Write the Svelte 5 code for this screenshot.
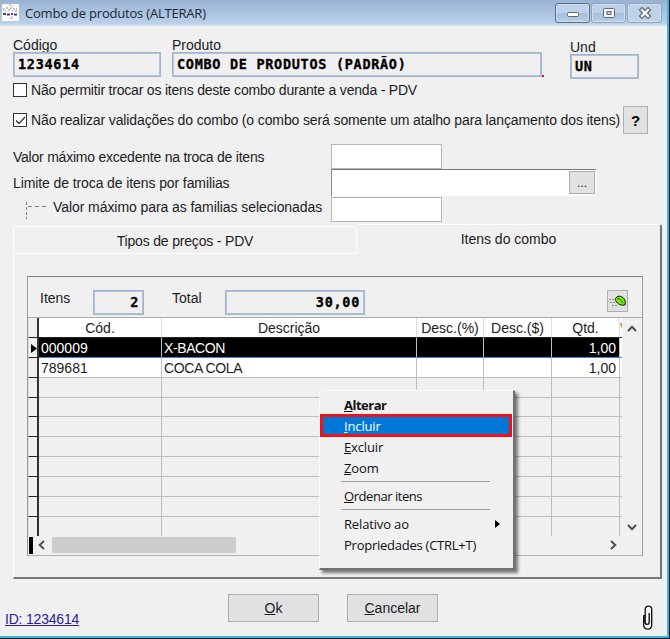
<script>
  let allowSwap = false;
  let skipValidation = true;
  let selected = 0;

  const columns = [
    { key: 'code', label: 'Cód.' },
    { key: 'name', label: 'Descrição' },
    { key: 'descPct', label: 'Desc.(%)' },
    { key: 'descVal', label: 'Desc.($)' },
    { key: 'qty', label: 'Qtd.' },
    { key: 'value', label: 'V' }
  ];

  const items = [
    { code: '000009', name: 'X-BACON', qty: '1,00' },
    { code: '789681', name: 'COCA COLA', qty: '1,00' }
  ];

  // the grid always shows ten rows, empty ones included
  const rows = Array.from({ length: 10 }, (_, i) => items[i] || null);

  const menu = [
    { key: 'A', rest: 'lterar', kind: 'default' },
    { key: 'I', rest: 'ncluir', kind: 'active' },
    { key: 'E', rest: 'xcluir' },
    { key: 'Z', rest: 'oom' },
    { separator: true },
    { key: 'O', rest: 'rdenar itens', kind: 'order' },
    { separator: true },
    { key: '', rest: 'Relativo ao', submenu: true },
    { key: '', rest: 'Propriedades (CTRL+T)', kind: 'props' }
  ];
</script>

<div class="window">
  <header class="titlebar">
    <svg class="app-icon" width="17" height="17" viewBox="0 0 17 17">
      <rect width="17" height="17" fill="#fff" />
      <path d="M1 5h2M4 4h2M8 4h2M11 5h2M14 5h1M3 7h1M6 6h2M10 7h1M13 7h2M7 1h2M10 2h1M8 14h2M10 13h1" stroke="#8b8b93" stroke-width="1" />
      <path d="M1 10h3M5 10.5h3M9 10h2M12 10.5h3" stroke="#3b41a8" stroke-width="2" />
    </svg>
    <span class="title">Combo de produtos (ALTERAR)</span>
    <div class="win-buttons">
      <button class="win-btn first" aria-label="Minimizar">
        <svg width="14" height="12" viewBox="0 0 14 12"><rect x="1.5" y="5.5" width="11" height="4" rx="1" fill="#fff" stroke="#64676f" /></svg>
      </button>
      <button class="win-btn" aria-label="Maximizar">
        <svg width="14" height="12" viewBox="0 0 14 12">
          <rect x="1.5" y="1.5" width="11" height="9" rx="1" fill="#f4f6f9" stroke="#64676f" />
          <rect x="5" y="4.5" width="4" height="3" fill="#b9cfe6" stroke="#64676f" />
        </svg>
      </button>
      <button class="win-btn last" aria-label="Fechar">
        <svg width="14" height="12" viewBox="0 0 14 12">
          <path d="M4 3l6 6M10 3l-6 6" stroke="#64676f" stroke-width="4.8" stroke-linecap="square" />
          <path d="M4 3l6 6M10 3l-6 6" stroke="#f4f6f9" stroke-width="2.4" stroke-linecap="square" />
        </svg>
      </button>
    </div>
  </header>

  <main class="body">
    <div class="fields">
      <div class="field code">
        <span class="label">Código</span>
        <div class="readonly">1234614</div>
      </div>
      <div class="field product">
        <span class="label">Produto</span>
        <div class="readonly">COMBO DE PRODUTOS (PADRÃO)</div>
        <i class="dot"></i>
      </div>
      <div class="field unit">
        <span class="label">Und</span>
        <div class="readonly">UN</div>
      </div>
    </div>

    <div class="check-row">
      <button class="checkbox" aria-label="Não permitir trocar" on:click={() => (allowSwap = !allowSwap)}>
        {#if allowSwap}<svg width="13" height="13" viewBox="0 0 13 13"><path d="M2 6.5l3 3 6-6.5" /></svg>{/if}
      </button>
      <span class="label check-a">Não permitir trocar os itens deste combo durante a venda - PDV</span>
    </div>
    <div class="check-row second">
      <button class="checkbox" aria-label="Não realizar validações" on:click={() => (skipValidation = !skipValidation)}>
        {#if skipValidation}<svg width="13" height="13" viewBox="0 0 13 13"><path d="M2 6.5l3 3 6-6.5" /></svg>{/if}
      </button>
      <span class="label check-b">Não realizar validações do combo (o combo será somente um atalho para lançamento dos itens)</span>
      <button class="help">?</button>
    </div>

    <div class="limit-row">
      <span class="label limit-a">Valor máximo excedente na troca de itens</span>
      <div class="input"></div>
    </div>
    <div class="limit-row lookup-row">
      <span class="label limit-b">Limite de troca de itens por familias</span>
      <div class="lookup"><button class="browse">...</button></div>
    </div>
    <div class="limit-row third">
      <svg class="branch" width="22" height="18" viewBox="0 0 22 18">
        <path d="M1.5 1v17" stroke="#808080" stroke-dasharray="3 2" />
        <path d="M3 5.5h19" stroke="#808080" stroke-dasharray="4 3" />
      </svg>
      <span class="label limit-c">Valor máximo para as familias selecionadas</span>
      <div class="input"></div>
    </div>

    <section class="tabs">
      <div class="tab-strip">
        <div class="tab label"><span class="tab-a">Tipos de preços - PDV</span></div>
        <div class="tab active label"><span class="tab-b">Itens do combo</span></div>
      </div>
      <div class="panel">
        <div class="frame">
          <div class="summary">
            <span class="label sum-items">Itens</span>
            <div class="readonly count">2</div>
            <span class="label sum-total">Total</span>
            <div class="readonly total">30,00</div>
            <button class="leaf" aria-label="Atualizar">
              <svg width="17" height="14" viewBox="0 0 17 14">
                <path d="M0 5.5h5M1 8.5h5M3 11.5h5" stroke="#8c8c8c" stroke-dasharray="2 1" />
                <path d="M6.5 4.5C8 1.5 12 1.5 14.5 4c2 2 2 4.5 1.500 7-3 .5-5.500 0-7.500-2C7 7.500 6 6 6.500 4.500z" fill="#7be80c" stroke="#111a08" />
                <path d="M8 5c2-1 4 .5 6 4" fill="none" stroke="#245b08" />
              </svg>
            </button>
          </div>

          <div class="grid-area">
            <div class="grid">
              <div class="row head">
                <div class="marker"></div>
                {#each columns as col}
                  <div class="cell {col.key}">{col.label}</div>
                {/each}
              </div>
              {#each rows as row, i}
                <div class="row" class:filled={row} class:selected={i === selected}>
                  <div class="marker">
                    {#if i === selected}
                      <svg width="6" height="9" viewBox="0 0 6 9"><path d="M0 0l6 4.500-6 4.500z" /></svg>
                    {/if}
                  </div>
                  {#each columns as col}
                    <div class="cell {col.key}">{row?.[col.key] ?? ''}</div>
                  {/each}
                </div>
              {/each}
            </div>
            <div class="vscroll">
              <svg width="10" height="7" viewBox="0 0 10 7"><path d="M1 6l4-4.300L9 6" /></svg>
              <svg width="10" height="7" viewBox="0 0 10 7"><path d="M1 1l4 4.300L9 1" /></svg>
            </div>
          </div>
          <div class="hscroll">
            <i class="split"></i>
            <svg width="7" height="10" viewBox="0 0 7 10"><path d="M6 1L1.700 5 6 9" /></svg>
            <i class="thumb"></i>
            <svg class="right" width="7" height="10" viewBox="0 0 7 10"><path d="M1 1l4.300 4L1 9" /></svg>
          </div>
        </div>
      </div>
    </section>

    <footer class="footer">
      <a class="label" href="#id">ID: 1234614</a>
      <button class="action ok"><u>O</u>k</button>
      <button class="action cancel"><u>C</u>ancelar</button>
      <svg class="clip" width="12" height="26" viewBox="0 0 12 26">
        <path d="M2 9v11c0 5 7 5 7 0V4.500c0-4-6-4-6 0V17c0 3 4 3 4 0V8" fill="none" stroke="#fff" stroke-width="4" />
        <path d="M1.700 10v10c0 5.500 8 5.500 8 0V4.500c0-4.500-6.500-4.500-6.500 0V17c0 3.200 4 3.200 4 0V8" fill="none" stroke="#111" stroke-width="1.400" />
      </svg>
    </footer>
  </main>

  <div class="menu">
    {#each menu as item}
      {#if item.separator}
        <hr />
      {:else}
        <div class="menu-item {item.kind ?? ''}">
          <span>{#if item.key}<u>{item.key}</u>{/if}{item.rest}</span>
          {#if item.submenu}
            <svg width="5" height="8" viewBox="0 0 5 8"><path d="M0 0l5 4-5 4z" /></svg>
          {/if}
        </div>
      {/if}
    {/each}
  </div>
</div>

<style>
  :global(body) {
    margin: 0;
    overflow: hidden;
  }

  .window {
    position: relative;
    box-sizing: border-box;
    width: 670px;
    height: 639px;
    background: #f0f0f0;
    border-right: 1px solid #101820;
    border-bottom: 1px solid #0b1115;
    box-shadow: inset -2px -2px 0 #37b9e6;
    font-family: 'Liberation Sans', Arial, sans-serif;
    font-size: 14px;
    color: #1c1c24;
    overflow: hidden;
  }

  .window :global(*) {
    box-sizing: border-box;
  }

  button {
    padding: 0;
    font: inherit;
    color: inherit;
    border-radius: 0;
  }

  svg {
    display: block;
    flex: none;
  }

  .label {
    white-space: nowrap;
    line-height: 16px;
  }

  .titlebar {
    display: flex;
    align-items: center;
    height: 26px;
    width: 667px;
    padding: 0 5px 1px 2px;
    background: linear-gradient(#98b3d2, #b9d1ea 90%, #d6e3f1);
  }

  .title {
    margin-left: 6px;
    font-family: 'Open Sans', 'Noto Sans', sans-serif;
    font-size: 13px;
    letter-spacing: -0.2px;
    color: #1d2733;
  }

  .win-buttons {
    display: flex;
    gap: 1px;
    margin-left: auto;
  }

  .win-btn {
    display: flex;
    align-items: center;
    justify-content: center;
    width: 35px;
    height: 20px;
    border: 1px solid #90a6bf;
    border-radius: 3px;
    box-shadow: inset 0 0 0 1px #cfdeee;
    background: linear-gradient(#bdd2e8 50%, #a5bfdb 50%, #b6cee7);
  }

  .win-btn.first {
    border-color: #596f88;
  }

  .win-btn.last {
    background: #bcd3ea;
  }

  .body {
    padding: 12px 7px 0 13px;
  }

  .fields {
    display: flex;
    height: 45px;
  }

  .field {
    display: flex;
    flex-direction: column;
    position: relative;
  }

  .field .label {
    height: 14px;
    line-height: 14px;
  }

  .field.code {
    width: 148px;
  }

  .field.product {
    width: 370px;
    margin-left: 11px;
  }

  .field.unit {
    width: 69px;
    margin: 2px 0 0 28px;
  }

  .dot {
    position: absolute;
    right: -2px;
    top: 37px;
    width: 2px;
    height: 2px;
    background: #e01020;
  }

  .readonly {
    height: 25px;
    padding-left: 4px;
    border: 1px solid #a9b3c0;
    box-shadow: inset 0 0 0 1px #a9c4e4;
    font-family: 'DejaVu Sans Mono', monospace;
    font-weight: bold;
    font-size: 13.5px;
    line-height: 22px;
    letter-spacing: 0.7px;
    -webkit-text-stroke: 0.3px #000;
    color: #000;
    white-space: nowrap;
  }

  .check-row {
    display: flex;
    align-items: center;
    height: 14px;
  }

  .check-row.second {
    height: 28px;
    margin: 9px 0 10px;
  }

  .check-a {
    letter-spacing: -0.2px;
  }

  .check-b {
    letter-spacing: -0.12px;
  }

  .checkbox {
    flex: none;
    width: 14px;
    height: 14px;
    margin-right: 4px;
    border: 1px solid #333;
    background: #fff;
  }

  .checkbox path {
    fill: none;
    stroke: #333;
    stroke-width: 1.3;
  }

  .help {
    flex: none;
    width: 25px;
    height: 28px;
    margin-left: auto;
    margin-right: 13px;
    border: 1px solid #adadad;
    background: #e1e1e1;
    font-weight: bold;
    font-size: 15px;
    color: #000;
  }

  .second .help {
    margin-right: 14px;
  }

  .limit-row {
    display: flex;
    align-items: center;
    height: 25px;
  }

  .limit-row .label {
    width: 318px;
  }

  .limit-a {
    letter-spacing: -0.23px;
  }

  .limit-b {
    letter-spacing: -0.1px;
  }

  .limit-c {
    letter-spacing: -0.07px;
  }

  .input {
    width: 111px;
    height: 25px;
    border: 1px solid #b5b5bb;
    background: #fff;
  }

  .lookup-row {
    height: 27px;
  }

  .lookup {
    width: 265px;
    height: 27px;
    padding: 1px 1px 2px;
    border-top: 1px solid #777;
    border-left: 1px solid #888;
    background: #fff;
  }

  .browse {
    display: block;
    width: 26px;
    height: 23px;
    margin-left: auto;
    border: 1px solid #adadad;
    background: #e1e1e1;
    font-size: 12px;
    line-height: 18px;
  }

  .third {
    margin-top: 1px;
  }

  .branch {
    margin-left: 12px;
  }

  .limit-row.third .label {
    width: 278px;
    margin: -6px 0 0 6px;
  }

  .tabs {
    margin-top: 2px;
    width: 649px;
  }

  .tab-strip {
    display: flex;
    height: 30px;
    align-items: flex-end;
  }

  .tab {
    width: 344px;
    height: 28px;
    border: 1px solid #fff;
    border-radius: 3px 3px 0 0;
    text-align: center;
    line-height: 28px;
  }

  .tab-a {
    letter-spacing: -0.18px;
  }

  .tab.active {
    width: 305px;
    height: 30px;
    border: 1px solid #fff;
    border-left: 0;
    border-right: 2px solid #777;
    border-bottom: 0;
    line-height: 29px;
  }

  .panel {
    height: 325px;
    padding: 22px 0 0 13px;
    border-left: 1px solid #fff;
    border-right: 2px solid #777;
    border-bottom: 2px solid #777;
  }

  .frame {
    width: 616px;
    height: 280px;
    border: 1px solid #9a9a9a;
    border-bottom-color: #b4b4b4;
    border-top-color: #808080;
  }

  .summary {
    display: flex;
    height: 40px;
    padding: 13px 0 0 12px;
  }

  .summary .readonly {
    padding-right: 4px;
    text-align: right;
  }

  .sum-items {
    width: 53px;
  }

  .count {
    width: 51px;
  }

  .sum-total {
    width: 53px;
    margin-left: 28px;
  }

  .total {
    width: 140px;
  }

  .leaf {
    display: flex;
    align-items: center;
    justify-content: center;
    width: 21px;
    height: 22px;
    margin-left: 242px;
    border: 1px solid #adadad;
    background: #e1e1e1;
  }

  .grid-area {
    display: flex;
    height: 219px;
    border-top: 1px solid #aaa;
  }

  .grid {
    width: 594px;
    overflow: hidden;
  }

  .row {
    display: flex;
    height: 19.860px;
  }

  .row.head {
    height: 20px;
    background: #fff;
  }

  .marker {
    display: flex;
    align-items: center;
    justify-content: flex-end;
    flex: none;
    width: 11px;
    padding: 2px 0 0;
    border-right: 2px solid #333;
    border-bottom: 1px solid #222;
    border-left: 1px solid #ddd;
    background: #f0f0f0;
  }

  .cell {
    flex: none;
    padding: 0 2px;
    border-right: 1px solid #bebebe;
    border-bottom: 1px solid #bebebe;
    line-height: 20px;
    white-space: nowrap;
    overflow: hidden;
  }

  .head .cell {
    padding: 0;
    text-align: center;
    border-right-color: #ddd;
    border-bottom-color: #222;
  }

  .cell.code {
    width: 123px;
  }

  .cell.name {
    width: 255px;
    letter-spacing: -0.4px;
  }

  .head .cell.name {
    letter-spacing: 0;
  }

  .cell.descPct {
    width: 67px;
  }

  .cell.descVal {
    width: 68px;
  }

  .cell.qty {
    width: 68px;
    padding-right: 3px;
    text-align: right;
  }

  .head .cell.qty {
    padding-right: 0;
    text-align: center;
  }

  .cell.value {
    width: 3px;
    padding: 0;
    border-right: 0;
    color: #b87830;
  }

  .filled .cell {
    background: #fff;
  }

  .selected .cell {
    background: #000;
    color: #fff;
    border-bottom-color: #3f86c8;
  }

  .selected .cell.value {
    background: #fff;
    border-right: 1px solid #3f86c8;
  }

  .vscroll {
    display: flex;
    flex-direction: column;
    justify-content: space-between;
    align-items: center;
    width: 20px;
    padding: 7px 0 5px;
  }

  .vscroll path,
  .hscroll path {
    fill: none;
    stroke: #505050;
    stroke-width: 2;
  }

  .hscroll {
    display: flex;
    align-items: center;
    height: 18px;
  }

  .split {
    width: 4px;
    height: 17px;
    margin: 0 5px 0 1px;
    background: #000;
  }

  .thumb {
    width: 184px;
    height: 16px;
    margin-left: 7px;
    background: #cdcdcd;
  }

  .hscroll .right {
    margin-left: 374px;
  }

  .footer {
    display: flex;
    height: 52px;
    padding-top: 15px;
  }

  .footer a {
    width: 75px;
    margin: 17px 0 0 -8px;
    color: #2b2395;
    letter-spacing: -0.2px;
  }

  .action {
    width: 91px;
    height: 28px;
    border: 1px solid #adadad;
    background: #e1e1e1;
  }

  .ok {
    margin-left: 148px;
  }

  .cancel {
    margin-left: 28px;
  }

  .clip {
    margin: 11px 0 0 204px;
  }

  /* context menu over the grid */
  .menu {
    position: absolute;
    left: 319px;
    top: 390px;
    width: 196px;
    height: 180px;
    padding: 3px 1px 0 1px;
    border: 1px solid #fafafa;
    border-right: 2px solid #6f6f6f;
    border-bottom: 2px solid #6f6f6f;
    background: #f0f0f0;
    box-shadow: 3px 3px 3px rgba(0, 0, 0, 0.5);
    font-family: 'Open Sans', 'Noto Sans', sans-serif;
    font-size: 13px;
    letter-spacing: -0.15px;
    color: #111;
  }

  .menu-item {
    display: flex;
    align-items: center;
    height: 21px;
    padding: 0 12px 0 23px;
    white-space: nowrap;
  }

  .menu-item svg {
    margin-left: auto;
  }

  .menu-item.default {
    height: 21px;
    font-weight: bold;
    letter-spacing: -0.5px;
  }

  .menu-item.active {
    height: 23px;
    margin: -1px 0 -1px -1px;
    padding-left: 21px;
    border: 3px solid #f3101a;
    background: #0078d7;
    color: #fff;
  }

  .menu-item.order {
    letter-spacing: -0.45px;
  }

  .menu-item.props {
    letter-spacing: -0.25px;
  }

  hr {
    height: 1px;
    margin: 3px 22px 4px 20px;
    border: 0;
    background: #a0a0a0;
  }

  hr + .menu-item {
    margin-top: -1px;
  }
</style>
